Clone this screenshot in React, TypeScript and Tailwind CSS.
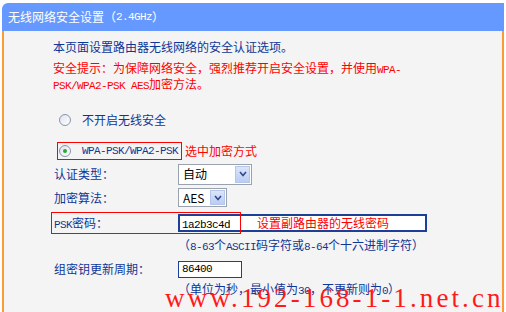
import React from 'react';

// ASCII 字符用等寬字體，寬度約 6px（模擬宋體半角）
const A: React.FC<{ children: React.ReactNode }> = ({ children }) => (
  <span className="font-['Liberation_Mono',monospace] text-[11px] leading-none tracking-[-0.6px]">{children}</span>
);

const Radio: React.FC<{ checked?: boolean }> = ({ checked }) => (
  <span className="w-[12px] h-[12px] rounded-full border border-[#8796ac] bg-gradient-to-br from-[#dfe3ea] to-white flex items-center justify-center">
    {checked && <span className="w-[4px] h-[4px] rounded-full bg-[#2ea82e]" />}
  </span>
);

const Chevron = () => (
  <svg width="8" height="6" viewBox="0 0 8 6">
    <path d="M1 1 L4 4.5 L7 1" fill="none" stroke="#33488a" strokeWidth="1.6" />
  </svg>
);

const Select: React.FC<{ value: string; width: string; height: string }> = ({ value, width, height }) => (
  <div className={`${width} ${height} border border-[#9aa3ad] bg-white flex items-center justify-between pl-[4px] pr-[1px]`}>
    <span className="text-black">{value}</span>
    <span className="w-[15px] h-[calc(100%-2px)] bg-gradient-to-b from-[#dbe5fb] to-[#b9cdf4] border border-[#b5c6ea] flex items-center justify-center">
      <Chevron />
    </span>
  </div>
);

export default function App() {
  return (
    <div className="relative w-[506px] h-[312px] bg-white overflow-hidden pt-[3px] px-[2px] font-['Noto_Sans_CJK_SC',sans-serif] text-[12px] leading-[16px] text-[#0f3696]">
      {/* 標題欄 */}
      <div className="h-[28px] bg-[#6699ff] rounded-tl-[6px] text-white pl-[6px] flex items-center">
        无线网络安全设置（<A>2.4GHz</A>）
      </div>

      {/* 內容區 */}
      <div className="h-[290px] bg-[#f4f4f4] border-l-2 border-r-2 border-[#ff9933] pl-[49px] pt-[8px]">
        <p className="h-[16px]">本页面设置路由器无线网络的安全认证选项。</p>
        <p className="mt-[5px] text-[#ff0000]">
          <span className="block h-[16px]">
            安全提示：为保障网络安全，强烈推荐开启安全设置，并使用<A>WPA-</A>
          </span>
          <span className="block h-[16px]">
            <A>PSK/WPA2-PSK AES</A>加密方法。
          </span>
        </p>

        <div className="mt-[18px] h-[20px] flex items-center gap-[11px] pl-[6px]">
          <Radio />
          <span>不开启无线安全</span>
        </div>

        <div className="mt-[12px] h-[18px] flex items-center">
          <div className="ml-[4px] h-[18px] border border-[#ff0000] flex items-center gap-[11px] pl-[1px] pr-[3px]">
            <Radio checked />
            <A>WPA-PSK/WPA2-PSK</A>
          </div>
          <span className="ml-[3px] text-[#ff0000]">选中加密方式</span>
        </div>

        <div className="mt-[3px] h-[22px] flex items-center">
          <span className="w-[125px] pl-[1px]">认证类型：</span>
          <Select value="自动" width="w-[74px]" height="h-[21px]" />
        </div>

        <div className="mt-[2px] h-[21px] flex items-center">
          <span className="w-[125px] pl-[1px]">加密算法：</span>
          <Select value="AES" width="w-[49px]" height="h-[19px]" />
        </div>

        <div className="relative mt-[4px] h-[22px] flex items-center">
          <span className="w-[125px] pl-[1px]">
            <A>PSK</A>密码：
          </span>
          <div className="w-[249px] h-[18px] border-2 border-[#1c3f98] bg-white flex items-center pl-[2px]">
            <span className="w-[75px] text-black">
              <A>1a2b3c4d</A>
            </span>
            <span className="text-[#ff0000]">设置副路由器的无线密码</span>
          </div>
          <div className="absolute left-[-2px] top-0 w-[190px] h-[22px] border border-[#ff0000]" />
        </div>

        <p className="mt-[3px] h-[16px] pl-[125px]">
          （<A>8-63</A>个<A>ASCII</A>码字符或<A>8-64</A>个十六进制字符）
        </p>

        <div className="mt-[7px] h-[18px] flex items-center">
          <span className="w-[125px] pl-[1px]">组密钥更新周期：</span>
          <div className="w-[64px] h-[17px] border border-[#1c3f98] bg-white flex items-center pl-[3px] text-black">
            <A>86400</A>
          </div>
        </div>

        <p className="mt-[3px] h-[16px] pl-[125px]">
          （单位为秒，最小值为<A>30</A>，不更新则为<A>0</A>）
        </p>
      </div>

      {/* 水印 */}
      <div className="absolute left-[165px] top-[285px] font-['Liberation_Serif',serif] text-[27px] leading-none tracking-[3.1px] text-[#ff1a1a] whitespace-nowrap">
        www.192-168-1-1.net.cn
      </div>
    </div>
  );
}
